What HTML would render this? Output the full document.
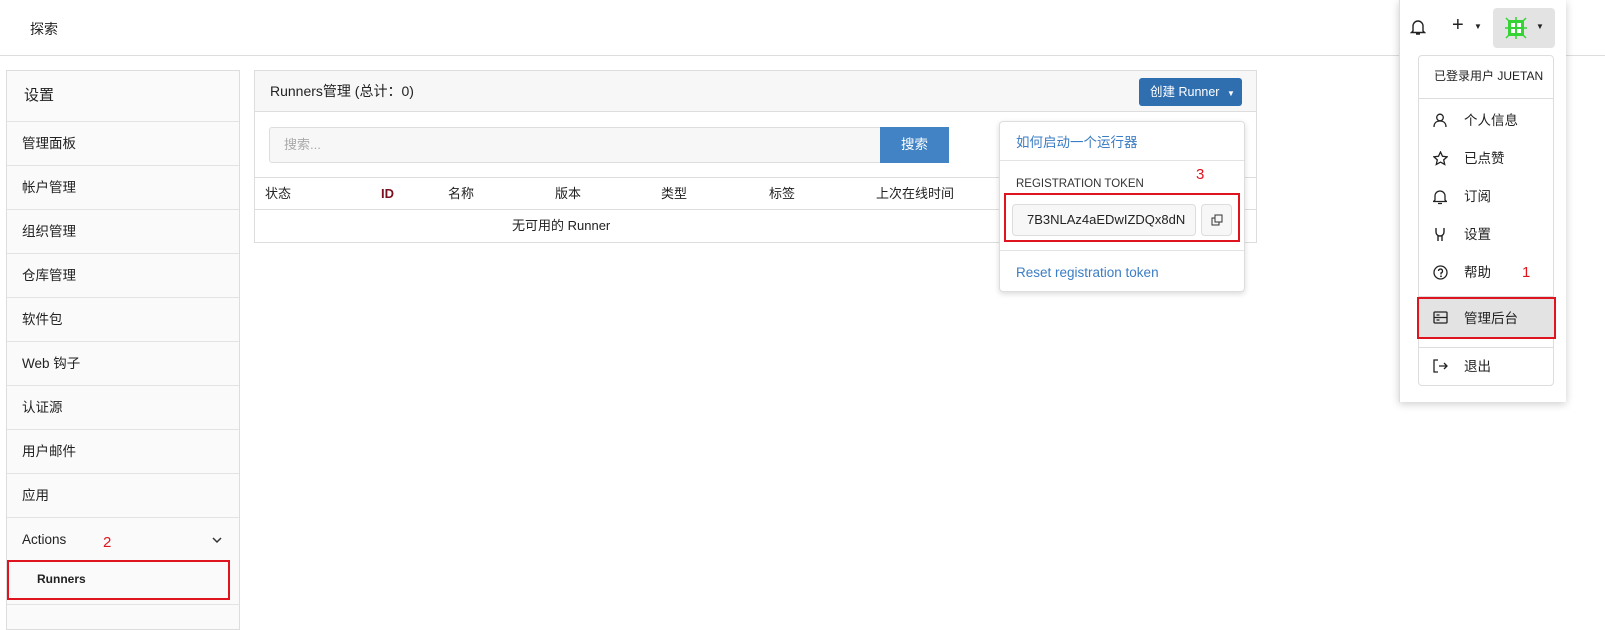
<!DOCTYPE html>
<html><head><meta charset="utf-8"><style>
*{box-sizing:border-box;margin:0;padding:0}
body{width:1605px;height:625px;overflow:hidden;background:#fff;font-family:"Liberation Sans","Noto Sans CJK SC",sans-serif;font-size:13px;color:#222;position:relative}
.abs{position:absolute}
.top{left:0;top:0;width:1605px;height:56px;border-bottom:1px solid #ddd}
.side{left:6px;top:70px;width:234px;height:560px;border:1px solid #ddd;background:#fafafa}
.side div{height:44px;border-top:1px solid #e3e3e3;padding-left:15px;line-height:44px;font-size:13.5px}
.red{border:2px solid #e0141e}
.main{left:254px;top:70px;width:1003px;height:173px;border:1px solid #ddd}
.mh{height:41px;background:#f7f7f7;border-bottom:1px solid #ddd;padding-left:15px;line-height:41px;font-size:14px}
.th{top:186px;font-size:13px;line-height:16px}
.dd{left:999px;top:121px;width:246px;height:171px;background:#fff;border:1px solid #ddd;border-radius:4px;box-shadow:0 2px 6px rgba(0,0,0,.15)}
.um{left:1399px;top:0;width:167px;height:402px;background:#fff;border-left:1px solid #ddd;box-shadow:0 2px 8px rgba(0,0,0,.2)}
.mi{left:1418px;width:136px;height:38px;line-height:38px;font-size:13.5px}
.mi span{position:absolute;left:46px}
.mi svg{position:absolute;left:15px;top:11px}
</style></head><body>
<div class="abs top"><div class="abs" style="left:30px;top:19px;font-size:14px">探索</div></div>
<div class="abs side">
<div style="height:50px;border-top:0;line-height:50px;font-size:15px;padding-left:17px">设置</div>
<div>管理面板</div><div>帐户管理</div><div>组织管理</div><div>仓库管理</div><div>软件包</div><div>Web 钩子</div><div>认证源</div><div>用户邮件</div><div>应用</div>
<div style="position:relative">Actions<span style="position:absolute;left:96px;color:#e0141e;font-size:15px;top:3px">2</span><svg style="position:absolute;left:205px;top:18px" width="10" height="8"><path d="M1 2l4 4 4-4" stroke="#333" stroke-width="1.5" fill="none"/></svg></div>
<div style="border-top:0;position:relative;font-weight:bold;font-size:12px;padding-left:30px;line-height:36px">Runners</div>
</div>
<div class="abs red" style="left:7px;top:560px;width:223px;height:40px"></div>
<div class="abs" style="left:7px;top:604px;width:233px;border-top:1px solid #e3e3e3"></div>
<div class="abs main"><div class="mh">Runners管理 (总计：0)</div></div>
<div class="abs" style="left:1139px;top:78px;width:103px;height:28px;background:#2f6fb0;border-radius:3px;color:#fff;font-size:12.5px;line-height:28px;padding-left:11px">创建 Runner <span style="font-size:8px;margin-left:4px">▼</span></div>
<div class="abs" style="left:269px;top:127px;width:612px;height:36px;border:1px solid #ddd;border-radius:3px 0 0 3px;background:#f7f7f7;color:#aaa;padding-left:14px;line-height:34px">搜索...</div>
<div class="abs" style="left:880px;top:127px;width:69px;height:36px;background:#4183c4;color:#fff;text-align:center;line-height:36px;font-size:13.5px">搜索</div>
<div class="abs" style="left:255px;top:177px;width:1001px;border-top:1px solid #ddd"></div>
<div class="abs" style="left:255px;top:209px;width:1001px;border-top:1px solid #ddd"></div>
<div class="abs th" style="left:265px">状态</div>
<div class="abs th" style="left:381px;color:#7a1020;font-weight:bold">ID</div>
<div class="abs th" style="left:448px">名称</div>
<div class="abs th" style="left:555px">版本</div>
<div class="abs th" style="left:661px">类型</div>
<div class="abs th" style="left:769px">标签</div>
<div class="abs th" style="left:876px">上次在线时间</div>
<div class="abs" style="left:512px;top:218px;line-height:16px">无可用的 Runner</div>
<div class="abs dd">
<div class="abs" style="left:16px;top:9px;color:#3b7dc4;font-size:13.5px">如何启动一个运行器</div>
<div class="abs" style="left:0;top:38px;width:244px;border-top:1px solid #e3e3e3"></div>
<div class="abs" style="left:16px;top:56px;font-size:11.5px;color:#333">REGISTRATION TOKEN</div>
<div class="abs" style="left:196px;top:44px;color:#e0141e;font-size:15px">3</div>
<div class="abs" style="left:12px;top:82px;width:184px;height:32px;border:1px solid #ddd;border-radius:4px;background:#f7f7f7;line-height:30px;padding-left:14px;font-size:13px;overflow:hidden;white-space:nowrap">7B3NLAz4aEDwIZDQx8dN</div>
<div class="abs" style="left:201px;top:82px;width:31px;height:32px;border:1px solid #ddd;border-radius:4px;background:#f7f7f7"><svg style="margin:9px" width="12" height="12"><rect x="1" y="4" width="7" height="7" fill="none" stroke="#333"/><rect x="4" y="1" width="7" height="7" fill="#f7f7f7" stroke="#333"/></svg></div>
<div class="abs" style="left:0;top:128px;width:244px;border-top:1px solid #e3e3e3"></div>
<div class="abs" style="left:16px;top:143px;color:#3b7dc4;font-size:13.5px">Reset registration token</div>
</div>
<div class="abs red" style="left:1004px;top:193px;width:236px;height:49px"></div>
<div class="abs um"></div>
<svg class="abs" style="left:1410px;top:18px" width="16" height="18"><path d="M3 13V8a5 5 0 0 1 10 0v5l1.5 1.5h-13z M6 16h4" fill="none" stroke="#222" stroke-width="1.4"/></svg>
<div class="abs" style="left:1452px;top:14px;font-size:20px">+</div><div class="abs" style="left:1474px;top:22px;font-size:8px">▼</div>
<div class="abs" style="left:1493px;top:8px;width:62px;height:40px;background:#e3e3e3;border-radius:4px"><svg style="position:absolute;left:12px;top:9px" width="22" height="22"><rect x="3" y="3" width="16" height="16" fill="#35d435"/><rect x="6" y="6" width="4" height="4" fill="#fff"/><rect x="12" y="6" width="4" height="4" fill="#fff"/><rect x="6" y="12" width="4" height="4" fill="#fff"/><rect x="12" y="12" width="4" height="4" fill="#fff"/><path d="M1 1l3 3M21 1l-3 3M1 21l3-3M21 21l-3-3M11 0v3M11 22v-3M0 11h3M22 11h-3" stroke="#35d435" stroke-width="1.5"/></svg><span style="position:absolute;left:43px;top:14px;font-size:8px">▼</span></div>
<div class="abs" style="left:1418px;top:55px;width:136px;height:331px;border:1px solid #ddd;border-radius:4px"></div>
<div class="abs" style="left:1434px;top:67px;font-size:12px">已登录用户 JUETAN</div>
<div class="abs" style="left:1419px;top:98px;width:134px;border-top:1px solid #ddd"></div>
<div class="abs mi" style="top:102px"><svg width="14" height="14"><circle cx="7" cy="4.5" r="3.3" fill="none" stroke="#222" stroke-width="1.3"/><path d="M1 14c0-4 2.5-6 6-6s6 2 6 6" fill="none" stroke="#222" stroke-width="1.3"/></svg><span>个人信息</span></div>
<div class="abs mi" style="top:140px"><svg width="15" height="15"><path d="M7.5 1l2 4.3 4.6.5-3.4 3.1 1 4.6-4.2-2.4-4.2 2.4 1-4.6L.9 5.8l4.6-.5z" fill="none" stroke="#222" stroke-width="1.3"/></svg><span>已点赞</span></div>
<div class="abs mi" style="top:178px"><svg width="14" height="16"><path d="M2 11V7a5 5 0 0 1 10 0v4l1.5 1.5h-13z M5 14.5h4" fill="none" stroke="#222" stroke-width="1.3"/></svg><span>订阅</span></div>
<div class="abs mi" style="top:216px"><svg width="14" height="15"><path d="M3 1v4a4 4 0 0 0 8 0V1M5 8v6M9 8v6" fill="none" stroke="#222" stroke-width="1.4"/></svg><span>设置</span></div>
<div class="abs mi" style="top:254px"><svg width="15" height="15"><circle cx="7.5" cy="7.5" r="6.5" fill="none" stroke="#222" stroke-width="1.3"/><path d="M5.5 6a2 2 0 1 1 2.5 2v1.5" fill="none" stroke="#222" stroke-width="1.3"/><circle cx="8" cy="11.3" r=".9" fill="#222"/></svg><span>帮助</span><span style="left:104px;color:#e0141e;font-size:15px">1</span></div>
<div class="abs" style="left:1419px;top:296px;width:134px;border-top:1px solid #ddd"></div>
<div class="abs" style="left:1418px;top:298px;width:137px;height:40px;background:#e3e3e3"></div>
<div class="abs mi" style="top:300px"><svg width="15" height="13"><rect x="1" y="1" width="13" height="11" rx="1" fill="none" stroke="#222" stroke-width="1.3"/><path d="M1 6.5h13M3.5 4h3M3.5 9h3" stroke="#222" stroke-width="1.2"/></svg><span>管理后台</span></div>
<div class="abs red" style="left:1417px;top:297px;width:139px;height:42px"></div>
<div class="abs" style="left:1419px;top:347px;width:134px;border-top:1px solid #ddd"></div>
<div class="abs mi" style="top:348px"><svg width="15" height="14"><path d="M5 1H1v12h4M6 7h8M11 4l3 3-3 3" fill="none" stroke="#222" stroke-width="1.3"/></svg><span>退出</span></div>
</body></html>
